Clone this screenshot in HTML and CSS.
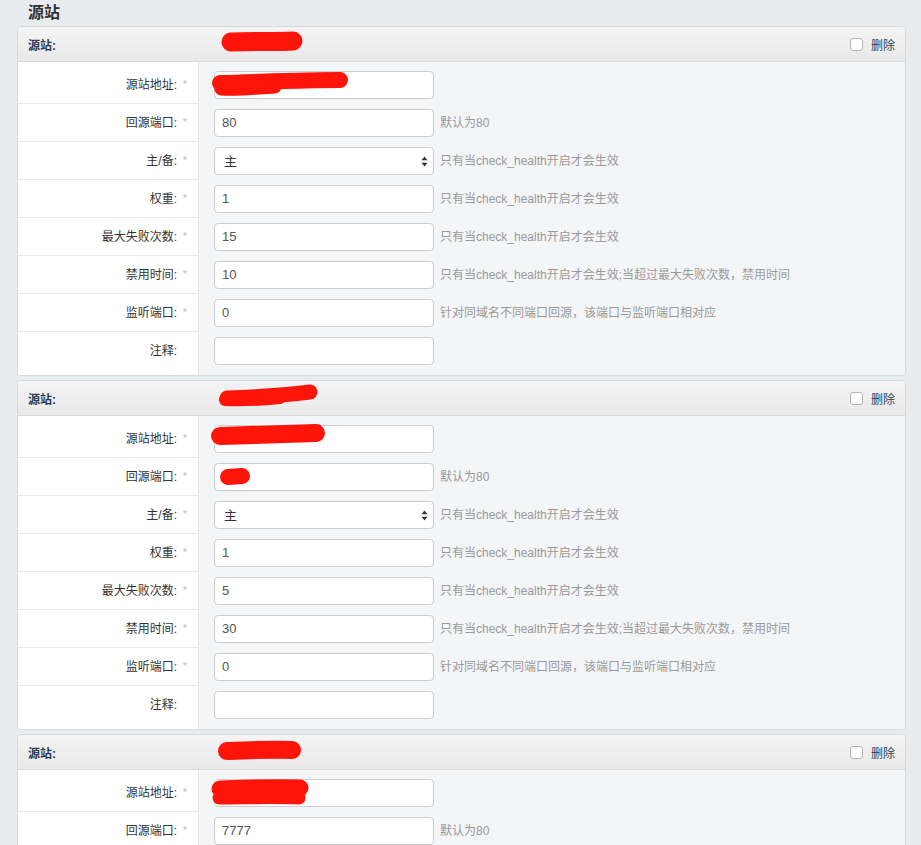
FILE: index.html
```html
<!DOCTYPE html>
<html lang="zh">
<head>
<meta charset="utf-8">
<title>源站</title>
<link rel="stylesheet" href="styles.css">
</head>
<body>
<div class="page">
  <h2 class="title">源站</h2>

  <div class="panel">
    <div class="panel-head">
      <span class="head-label">源站:</span>
      <label class="del"><input type="checkbox" class="chk"><span>删除</span></label>
    </div>
    <div class="panel-body">
      <div class="row first"><div class="lab">源站地址:<span class="req">*</span></div><div class="fld"><input class="inp" value=""></div></div>
      <div class="row"><div class="lab">回源端口:<span class="req">*</span></div><div class="fld"><input class="inp" value="80"><span class="help">默认为80</span></div></div>
      <div class="row"><div class="lab">主/备:<span class="req">*</span></div><div class="fld"><div class="sel">主<svg class="arr" width="7" height="11" viewBox="0 0 7 11"><path d="M3.5 0.5 L6.5 4.3 L0.5 4.3 Z M3.5 10.5 L6.5 6.7 L0.5 6.7 Z" fill="#333"/></svg></div><span class="help">只有当check_health开启才会生效</span></div></div>
      <div class="row"><div class="lab">权重:<span class="req">*</span></div><div class="fld"><input class="inp" value="1"><span class="help">只有当check_health开启才会生效</span></div></div>
      <div class="row"><div class="lab">最大失败次数:<span class="req">*</span></div><div class="fld"><input class="inp" value="15"><span class="help">只有当check_health开启才会生效</span></div></div>
      <div class="row"><div class="lab">禁用时间:<span class="req">*</span></div><div class="fld"><input class="inp" value="10"><span class="help">只有当check_health开启才会生效;当超过最大失败次数，禁用时间</span></div></div>
      <div class="row"><div class="lab">监听端口:<span class="req">*</span></div><div class="fld"><input class="inp" value="0"><span class="help">针对同域名不同端口回源，该端口与监听端口相对应</span></div></div>
      <div class="row last"><div class="lab">注释:<span class="req"></span></div><div class="fld"><input class="inp" value=""></div></div>
    </div>
  </div>

  <div class="panel">
    <div class="panel-head">
      <span class="head-label">源站:</span>
      <label class="del"><input type="checkbox" class="chk"><span>删除</span></label>
    </div>
    <div class="panel-body">
      <div class="row first"><div class="lab">源站地址:<span class="req">*</span></div><div class="fld"><input class="inp" value=""></div></div>
      <div class="row"><div class="lab">回源端口:<span class="req">*</span></div><div class="fld"><input class="inp" value=""><span class="help">默认为80</span></div></div>
      <div class="row"><div class="lab">主/备:<span class="req">*</span></div><div class="fld"><div class="sel">主<svg class="arr" width="7" height="11" viewBox="0 0 7 11"><path d="M3.5 0.5 L6.5 4.3 L0.5 4.3 Z M3.5 10.5 L6.5 6.7 L0.5 6.7 Z" fill="#333"/></svg></div><span class="help">只有当check_health开启才会生效</span></div></div>
      <div class="row"><div class="lab">权重:<span class="req">*</span></div><div class="fld"><input class="inp" value="1"><span class="help">只有当check_health开启才会生效</span></div></div>
      <div class="row"><div class="lab">最大失败次数:<span class="req">*</span></div><div class="fld"><input class="inp" value="5"><span class="help">只有当check_health开启才会生效</span></div></div>
      <div class="row"><div class="lab">禁用时间:<span class="req">*</span></div><div class="fld"><input class="inp" value="30"><span class="help">只有当check_health开启才会生效;当超过最大失败次数，禁用时间</span></div></div>
      <div class="row"><div class="lab">监听端口:<span class="req">*</span></div><div class="fld"><input class="inp" value="0"><span class="help">针对同域名不同端口回源，该端口与监听端口相对应</span></div></div>
      <div class="row last"><div class="lab">注释:<span class="req"></span></div><div class="fld"><input class="inp" value=""></div></div>
    </div>
  </div>

  <div class="panel">
    <div class="panel-head">
      <span class="head-label">源站:</span>
      <label class="del"><input type="checkbox" class="chk"><span>删除</span></label>
    </div>
    <div class="panel-body">
      <div class="row first"><div class="lab">源站地址:<span class="req">*</span></div><div class="fld"><input class="inp" value=""></div></div>
      <div class="row last"><div class="lab">回源端口:<span class="req">*</span></div><div class="fld"><input class="inp" value="7777"><span class="help">默认为80</span></div></div>
    </div>
  </div>
</div>

<svg class="redact" width="921" height="845" viewBox="0 0 921 845">
  <g stroke="#ff1409" stroke-linecap="round" fill="none">
    <path d="M231,42 C255,41 275,42 293,41" stroke-width="19"/>
    <path d="M220,83 C260,82 300,80 340,80" stroke-width="16"/>
    <path d="M221,89 C240,90 255,88 275,87" stroke-width="13"/>
    <path d="M227,398 C255,397 285,395 310,392" stroke-width="15"/>
    <path d="M225,400 C245,401 260,400 280,398" stroke-width="12"/>
    <path d="M220,436 C255,435 290,434 316,433" stroke-width="18"/>
    <path d="M228,477 L242,476" stroke-width="16"/>
    <path d="M227,751 C250,750 272,749 292,750" stroke-width="18"/>
    <path d="M220,789 C250,788 275,787 300,788" stroke-width="17"/>
    <path d="M219,798 C245,798 270,797 299,798" stroke-width="13"/>
  </g>
</svg>
</body>
</html>
```

FILE: styles.css
```css
html, body {
  margin: 0;
  padding: 0;
}
body {
  position: relative;
  background: #e9ecef;
  font-family: "Liberation Sans", "Noto Sans CJK SC", sans-serif;
  font-size: 12px;
  color: #333;
}
.page {
  padding: 0 15px 0 17px;
}
.title {
  margin: 0;
  height: 26px;
  box-sizing: border-box;
  padding: 2px 0 0 11px;
  line-height: 22px;
  font-size: 16px;
  font-weight: bold;
  color: #333;
}
.panel {
  background: #fff;
  border: 1px solid #d8dadd;
  border-radius: 4px;
  margin-bottom: 4px;
  overflow: hidden;
}
.panel-head {
  height: 34px;
  display: flex;
  align-items: center;
  justify-content: space-between;
  padding: 0 10px;
  background: linear-gradient(#f4f4f4, #e9e9e9);
  border-bottom: 1px solid #dadada;
}
.head-label {
  font-weight: bold;
  color: #2a3a4e;
}
.del {
  display: flex;
  align-items: center;
  color: #2f3e50;
}
.chk {
  appearance: none;
  -webkit-appearance: none;
  width: 13px;
  height: 13px;
  margin: 0 8px 0 0;
  border: 1px solid #b3b3b3;
  border-radius: 3px;
  background: #fff;
}
.row {
  display: grid;
  grid-template-columns: 181px 1fr;
}
.lab {
  height: 38px;
  box-sizing: border-box;
  background: #fff;
  border-right: 1px solid #e6e7e9;
  border-bottom: 1px solid #e8e9eb;
  display: flex;
  align-items: center;
  justify-content: flex-end;
  padding: 0 11px 2px 0;
  color: #333;
}
.req {
  display: inline-block;
  width: 9px;
  margin-left: 1px;
  text-align: right;
  color: #c0c0c0;
  font-size: 11px;
}
.fld {
  background: #f4f5f7;
  display: flex;
  align-items: center;
  padding-left: 15px;
  height: 38px;
  box-sizing: border-box;
}
.row.first .lab,
.row.first .fld {
  height: 42px;
  padding-top: 4px;
}
.row.last .lab,
.row.last .fld {
  height: 43px;
  padding-bottom: 6px;
  border-bottom: none;
}
.row.last .lab {
  padding-bottom: 8px;
}
.inp {
  width: 220px;
  height: 28px;
  box-sizing: border-box;
  border: 1px solid #cdcdcd;
  border-radius: 4px;
  padding: 0 7px 1px;
  margin: 0;
  font-family: "Liberation Sans", "Noto Sans CJK SC", sans-serif;
  font-size: 13px;
  color: #555;
  background: #fff;
}
.sel {
  position: relative;
  width: 220px;
  height: 28px;
  box-sizing: border-box;
  border: 1px solid #cdcdcd;
  border-radius: 4px;
  padding: 0 9px 1px;
  display: flex;
  align-items: center;
  font-size: 13px;
  color: #333;
  background: #fff;
}
.arr {
  position: absolute;
  right: 5px;
  top: 8px;
}
.help {
  margin: 0 0 3px 6px;
  color: #9a9a9a;
  white-space: nowrap;
}
.redact {
  position: absolute;
  left: 0;
  top: 0;
  pointer-events: none;
}
```
